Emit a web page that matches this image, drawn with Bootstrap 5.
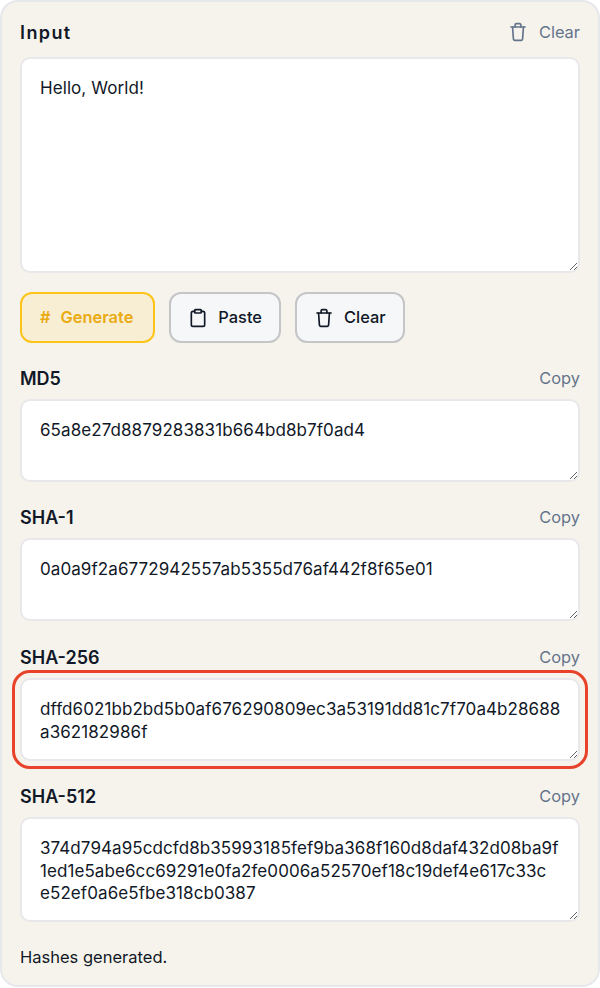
<!DOCTYPE html>
<html lang="en">
<head>
<meta charset="utf-8">
<title>Hash Generator</title>
<link href="https://cdn.jsdelivr.net/npm/bootstrap@5.3.0/dist/css/bootstrap.min.css" rel="stylesheet">
<style>
html,body{margin:0;background:#fff;}
body{font-family:Inter,"Noto Sans",sans-serif;color:#111827;font-size:16px;}
.tool-panel{width:600px;height:987px;background:#f6f3ec;border:2px solid #e6e8ec;border-radius:18px;padding:18px 18px 0;}
.field-head{height:24px;display:flex;justify-content:space-between;align-items:center;}
.field-title{font-weight:600;font-size:18px;color:#111827;}
.wide-title{letter-spacing:1.4px;}
.ghost-action{display:flex;align-items:center;gap:11px;background:none;border:0;padding:0;color:#64748b;font-size:16.4px;}
.hash-area.form-control{display:block;width:100%;border:2px solid #e8e8ea;border-radius:10px;padding:18.300px 8px 0 18px;font-size:17px;line-height:22.5px;color:#111827;background:#fff;box-shadow:none;white-space:pre-wrap;overflow:hidden;letter-spacing:.08px;}
.main-area.form-control{height:216px;margin-top:13px;}
.two-line.form-control{height:83px;}
.three-line.form-control{height:105px;}
.action-row{display:flex;gap:14px;margin-top:19px;}
.act-btn.btn{height:51px;display:flex;align-items:center;gap:10px;border-radius:12px;border:2px solid #c4c5c7;background:#f6f7f9;color:#111827;font-weight:500;font-size:16.4px;padding:0 17px;}
.act-btn.gen-btn{border-color:#fcc419;background:#f8eed4;color:#eaaa12;font-weight:600;padding:0 20px 0 18px;}
.hash-block{margin-top:23px;}
.hash-block .field-head{margin-bottom:9px;}
.first-block{margin-top:23px;}
.spaced-block{margin-top:24px;}
.flagged{position:relative;}
.flagged::after{content:"";position:absolute;inset:-8px;border:3.5px solid #e8432a;border-radius:18px;pointer-events:none;}
.status-line{margin-top:23px;font-size:16.5px;color:#111827;}
</style>
</head>
<body>
<div class="tool-panel">
  <div class="field-head">
    <span class="field-title wide-title">Input</span>
    <button class="ghost-action" type="button">
      <svg width="20" height="20" viewBox="0 0 24 24" fill="none" stroke="currentColor" stroke-width="2" stroke-linecap="round" stroke-linejoin="round"><path d="M3.5 6h17"/><path d="M5.5 6l1 14.5a1.5 1.5 0 0 0 1.5 1.5h8a1.5 1.5 0 0 0 1.500-1.500l1-14.500"/><path d="M8.500 6V3.500A1.500 1.500 0 0 1 10 2h4a1.500 1.500 0 0 1 1.500 1.500V6"/></svg>
      Clear
    </button>
  </div>
  <textarea class="form-control hash-area main-area">Hello, World!</textarea>
  <div class="action-row">
    <button class="btn act-btn gen-btn" type="button"><span>#</span> Generate</button>
    <button class="btn act-btn" type="button">
      <svg width="20" height="20" viewBox="0 0 24 24" fill="none" stroke="currentColor" stroke-width="2" stroke-linecap="round" stroke-linejoin="round"><rect x="8" y="2" width="8" height="4" rx="1"/><path d="M16 4h2a2 2 0 0 1 2 2v14a2 2 0 0 1-2 2H6a2 2 0 0 1-2-2V6a2 2 0 0 1 2-2h2"/></svg>
      Paste
    </button>
    <button class="btn act-btn" type="button">
      <svg width="20" height="20" viewBox="0 0 24 24" fill="none" stroke="currentColor" stroke-width="2" stroke-linecap="round" stroke-linejoin="round"><path d="M3.500 6h17"/><path d="M5.500 6l1 14.500a1.500 1.500 0 0 0 1.500 1.500h8a1.500 1.500 0 0 0 1.500-1.500l1-14.500"/><path d="M8.500 6V3.500A1.500 1.500 0 0 1 10 2h4a1.500 1.500 0 0 1 1.500 1.500V6"/></svg>
      Clear
    </button>
  </div>
  <div class="hash-block first-block">
    <div class="field-head"><span class="field-title">MD5</span><button class="ghost-action" type="button">Copy</button></div>
    <textarea class="form-control hash-area two-line">65a8e27d8879283831b664bd8b7f0ad4</textarea>
  </div>
  <div class="hash-block">
    <div class="field-head"><span class="field-title">SHA-1</span><button class="ghost-action" type="button">Copy</button></div>
    <textarea class="form-control hash-area two-line">0a0a9f2a6772942557ab5355d76af442f8f65e01</textarea>
  </div>
  <div class="hash-block spaced-block">
    <div class="field-head"><span class="field-title">SHA-256</span><button class="ghost-action" type="button">Copy</button></div>
    <div class="flagged"><textarea class="form-control hash-area two-line">dffd6021bb2bd5b0af676290809ec3a53191dd81c7f70a4b28688
a362182986f</textarea></div>
  </div>
  <div class="hash-block">
    <div class="field-head"><span class="field-title">SHA-512</span><button class="ghost-action" type="button">Copy</button></div>
    <textarea class="form-control hash-area three-line">374d794a95cdcfd8b35993185fef9ba368f160d8daf432d08ba9f
1ed1e5abe6cc69291e0fa2fe0006a52570ef18c19def4e617c33c
e52ef0a6e5fbe318cb0387</textarea>
  </div>
  <div class="status-line">Hashes generated.</div>
</div>
<script src="https://cdn.jsdelivr.net/npm/bootstrap@5.3.0/dist/js/bootstrap.bundle.min.js"></script>
</body>
</html>
